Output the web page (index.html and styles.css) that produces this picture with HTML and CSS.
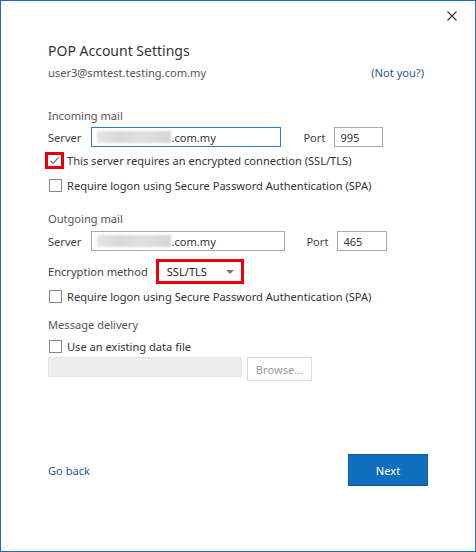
FILE: index.html
```html
<!DOCTYPE html>
<html>
<head>
<meta charset="utf-8">
<link rel="stylesheet" href="styles.css">
</head>
<body>
<div class="window">
  <div class="titlebar">
    <svg class="close" width="10" height="10" viewBox="0 0 10 10"><path d="M0.5 0.5L9.5 9.5M9.5 0.5L0.5 9.5" stroke="#333" stroke-width="1.1"/></svg>
  </div>
  <div class="content">
    <div class="title">POP Account Settings</div>
    <div class="account">
      <span class="email">user3@smtest.testing.com.my</span>
      <span class="link">(Not you?)</span>
    </div>

    <div class="section incoming">
      <div class="heading">Incoming mail</div>
      <div class="row server-row">
        <span class="label">Server</span>
        <div class="input focused server-in"><span class="blur"></span>.com.my</div>
        <span class="label port-label">Port</span>
        <div class="input port-in">995</div>
      </div>
      <div class="check-row first">
        <span class="redbox"><span class="box checked"><svg width="11" height="11" viewBox="0 0 11 11"><path d="M1.5 5.8L4.2 8.4L9.6 2.2" fill="none" stroke="#777" stroke-width="1.3"/></svg></span></span>
        <span class="ctext">This server requires an encrypted connection (SSL/TLS)</span>
      </div>
      <div class="check-row">
        <span class="box"></span>
        <span class="ctext">Require logon using Secure Password Authentication (SPA)</span>
      </div>
    </div>

    <div class="section outgoing">
      <div class="heading">Outgoing mail</div>
      <div class="row server-row">
        <span class="label">Server</span>
        <div class="input server-in2"><span class="blur"></span>.com.my</div>
        <span class="label port-label2">Port</span>
        <div class="input port-in2">465</div>
      </div>
      <div class="row enc-row">
        <span class="label">Encryption method</span>
        <div class="redsel">
          <span class="seltext">SSL/TLS</span>
          <svg class="caret" width="8" height="4" viewBox="0 0 8 4"><path d="M0 0H8L4 4Z" fill="#777"/></svg>
        </div>
      </div>
      <div class="check-row">
        <span class="box"></span>
        <span class="ctext">Require logon using Secure Password Authentication (SPA)</span>
      </div>
    </div>

    <div class="section delivery">
      <div class="heading">Message delivery</div>
      <div class="check-row data-check">
        <span class="box"></span>
        <span class="ctext">Use an existing data file</span>
      </div>
      <div class="row file-row">
        <div class="file-in"></div>
        <div class="browse">Browse...</div>
      </div>
    </div>

    <div class="footer">
      <span class="link goback">Go back</span>
      <div class="next">Next</div>
    </div>
  </div>
</div>
</body>
</html>
```

FILE: styles.css
```css
html, body {
  margin: 0;
  padding: 0;
  background: #fff;
}
.window {
  width: 476px;
  height: 552px;
  box-sizing: border-box;
  border: 1px solid #1e6cb8;
  background: #fff;
  font-family: "Noto Sans", "Open Sans", sans-serif;
  font-size: 11.1px;
  color: #333;
}
.titlebar {
  display: flex;
  justify-content: flex-end;
  padding: 10px 18px 0 0;
  height: 20px;
}
.close {
  display: block;
}
.content {
  padding: 0 47px 0 47px;
}
.title {
  font-size: 14px;
  line-height: 20px;
  margin-top: 10px;
  color: #333;
}
.account {
  display: flex;
  justify-content: space-between;
  line-height: 16px;
  margin-top: 4px;
  padding-right: 4px;
}
.email {
  color: #555;
}
.link {
  color: #2b5797;
}
.section {
  display: flex;
  flex-direction: column;
}
.incoming {
  margin-top: 27px;
}
.outgoing {
  margin-top: 13px;
}
.delivery {
  margin-top: 8px;
}
.heading {
  color: #555;
  line-height: 16px;
}
.row {
  display: flex;
  align-items: center;
}
.server-row {
  margin-top: 3px;
  height: 20px;
}
.outgoing .server-row {
  margin-top: 4px;
}
.label {
  color: #444;
}
.input {
  box-sizing: border-box;
  height: 20px;
  border: 1px solid #aaa;
  display: flex;
  align-items: center;
  padding-left: 5px;
  color: #333;
}
.input.focused {
  border-color: #2b7bc8;
}
.server-in {
  width: 190px;
  margin-left: 10px;
}
.server-in2 {
  width: 194px;
  margin-left: 10px;
}
.port-label {
  margin-left: 22px;
}
.port-label2 {
  margin-left: 21px;
}
.port-in {
  width: 49px;
  margin-left: 9px;
}
.port-in2 {
  width: 50px;
  margin-left: 9px;
}
.blur {
  display: inline-block;
  width: 74px;
  height: 12px;
  background: linear-gradient(90deg, #e6e6e6, #d8d8d8 30%, #e0e0e0 60%, #d6d6d6);
  filter: blur(1px);
}
.check-row {
  display: flex;
  align-items: center;
  height: 25px;
}
.check-row.first {
  margin-top: 1px;
}
.box {
  box-sizing: border-box;
  width: 13px;
  height: 13px;
  border: 1px solid #888;
  margin-left: 1px;
  margin-right: 5px;
  flex: none;
  display: flex;
  align-items: center;
  justify-content: center;
}
.redbox {
  box-sizing: border-box;
  width: 19px;
  height: 17px;
  border: 3px solid #e8000b;
  margin-left: -3px;
  margin-right: 3px;
  display: flex;
  align-items: center;
  justify-content: center;
}
.redbox .box {
  margin: 0;
  border: none;
}
.ctext {
  color: #333;
}
.enc-row {
  margin-top: 8px;
  height: 25px;
}
.redsel {
  box-sizing: border-box;
  width: 88px;
  height: 25px;
  border: 3px solid #e8000b;
  margin-left: 8px;
  display: flex;
  align-items: center;
  justify-content: space-between;
  padding: 0 7px 0 8px;
}
.seltext {
  color: #222;
}
.data-check {
  margin-top: 1px;
}
.file-row {
  margin-top: -2px;
  align-items: flex-start;
}
.file-in {
  width: 194px;
  height: 20px;
  background: #eee;
  border: 1px solid #e4e4e4;
  box-sizing: border-box;
}
.browse {
  box-sizing: border-box;
  margin-left: 5px;
  width: 65px;
  height: 24px;
  border: 1px solid #ddd;
  color: #999;
  display: flex;
  align-items: center;
  justify-content: center;
}
.footer {
  display: flex;
  justify-content: space-between;
  align-items: center;
  margin-top: 73px;
}
.next {
  box-sizing: border-box;
  width: 80px;
  height: 32px;
  background: #106ebe;
  border: 1px solid #0b5a9e;
  color: #fff;
  display: flex;
  align-items: center;
  justify-content: center;
}
```
